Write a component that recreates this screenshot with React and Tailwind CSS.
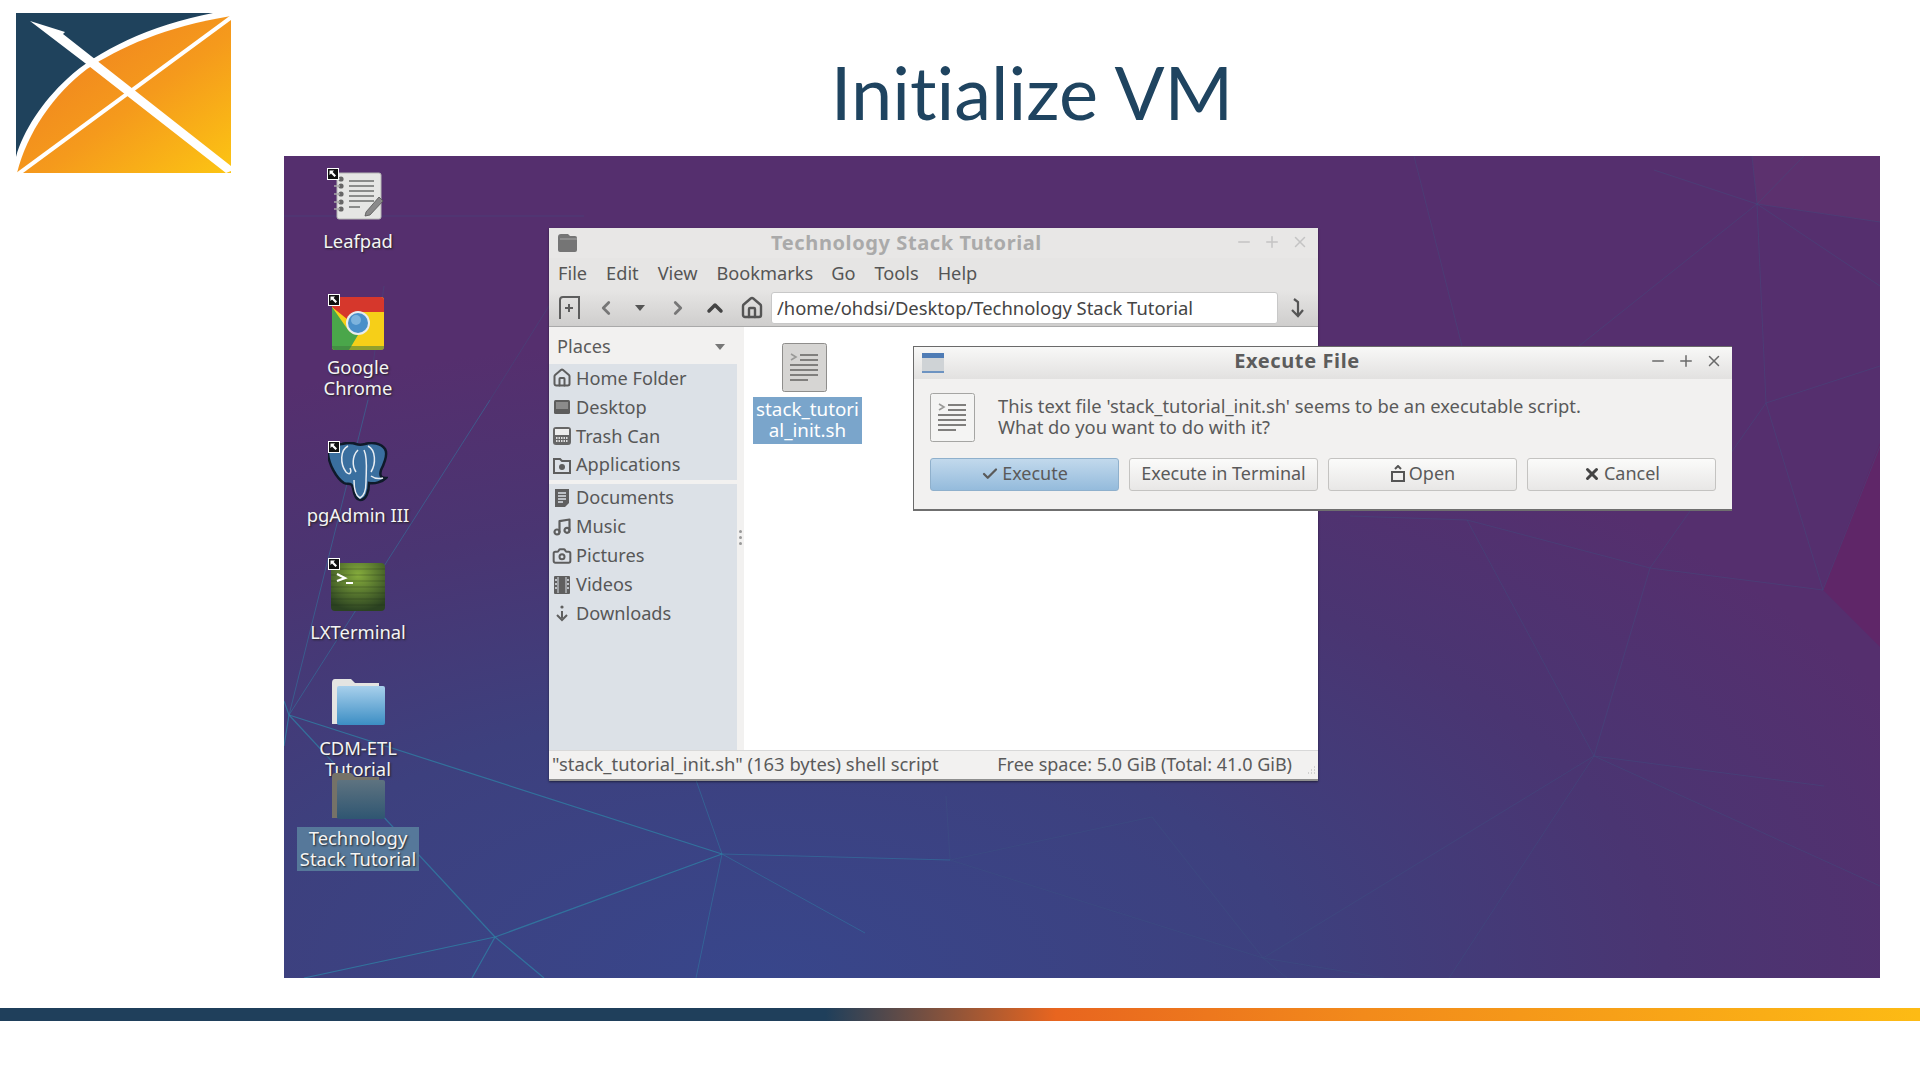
import { ChevronLeft, ChevronRight, ChevronUp, Check, X, Minus, Plus, Home, Camera, Music } from "lucide-react";

const uiFont = "font-['Noto_Sans',sans-serif]";

function Logo() {
  return (
    <svg width="216" height="161" viewBox="0 0 216 161" className="block">
      <defs>
        <linearGradient id="logoOrange" x1="0.2" y1="0.2" x2="1" y2="1">
          <stop offset="0" stopColor="#f0851f" />
          <stop offset="0.45" stopColor="#f59a1c" />
          <stop offset="1" stopColor="#fcc513" />
        </linearGradient>
      </defs>
      <path d="M1 0H198C135 12 82 38 52 66C28 88 8 118 1 144Z" fill="#1f425c" />
      <path d="M216 3C150 14 105 34 72 56C38 82 12 120 2 160H216Z" fill="url(#logoOrange)" />
      <path d="M15 8L50 19L48 21L216 153V158L211 160L70 50Z" fill="#fff" />
      <path d="M216 2V7L8 160H1Z" fill="#fff" />
    </svg>
  );
}

function Wallpaper() {
  const bright = [
    "M5 559L438 698",
    "M438 698L211 781",
    "M211 781L20 822",
    "M211 781L188 822",
    "M211 781L260 822",
    "M5 559L211 781",
    "M5 559L0 590",
    "M5 559L0 545",
  ];
  const medium = [
    "M5 559L84 244",
    "M5 559L206 244",
    "M438 698L412 822",
    "M438 698L581 777",
    "M438 698L666 704",
    "M438 698L400 590",
  ];
  const faint = [
    "M206 244L290 110",
    "M84 244L100 130",
    "M666 704L868 661",
    "M868 661L979 802",
    "M666 704L979 802",
    "M979 802L1003 822",
    "M979 802L1100 822",
    "M979 802L1310 600",
    "M666 704L662 640",
    "M1310 600L1165 822",
    "M1310 600L1540 630",
    "M1310 600L1596 730",
    "M1366 412L1310 600",
    "M1366 412L1539 434",
    "M1366 412L1183 364",
    "M1183 364L1310 600",
    "M1183 364L1066 360",
    "M1473 48L1468 0",
    "M1473 48L1520 0",
    "M1473 48L1596 66",
    "M1473 48L1596 130",
    "M1473 48L1482 247",
    "M1473 48L1370 14",
    "M1482 247L1539 434",
    "M1482 247L1596 210",
    "M1539 434L1596 290",
    "M1130 0L1183 210",
    "M0 60L300 60",
    "M1482 247L1366 412",
    "M1270 210L1473 48",
  ];
  return (
    <svg width="1596" height="822" viewBox="0 0 1596 822" className="absolute inset-0">
      <defs>
        <radialGradient id="wallBase" gradientUnits="userSpaceOnUse" cx="0" cy="0" r="1" gradientTransform="translate(480 822) scale(1250 640)">
          <stop offset="0" stopColor="#38468b" />
          <stop offset="0.42" stopColor="#3d407e" />
          <stop offset="0.72" stopColor="#4a3572" />
          <stop offset="1" stopColor="#552f6e" />
        </radialGradient>
      </defs>
      <rect width="1596" height="822" fill="url(#wallBase)" />
      <path d="M1539 434L1596 287V491Z" fill="#5f2668" />
      <path d="M1468 0H1596V66L1473 48Z" fill="#5c316e" />
      {faint.map((d) => (
        <path key={d} d={d} stroke="#3d5585" strokeOpacity="0.35" fill="none" />
      ))}
      {medium.map((d) => (
        <path key={d} d={d} stroke="#2f7fa6" strokeOpacity="0.5" fill="none" />
      ))}
      {bright.map((d) => (
        <path key={d} d={d} stroke="#2f81a6" strokeOpacity="0.75" strokeWidth="1.2" fill="none" />
      ))}
    </svg>
  );
}

function Emblem({ className }) {
  return (
    <svg width="12" height="12" viewBox="0 0 12 12" className={`absolute ${className}`}>
      <rect width="12" height="12" fill="#fff" />
      <rect x="1" y="1" width="10" height="10" fill="#111" />
      <path d="M2.5 2.5H7L5.6 4L9 7.5L7.5 9L4 5.6L2.5 7Z" fill="#fff" />
    </svg>
  );
}

function LeafpadIcon() {
  return (
    <svg width="50" height="50" viewBox="0 0 50 50">
      <rect x="4" y="1" width="44" height="46" rx="2" fill="#e5e6e4" stroke="#b5b6b4" />
      {[7, 14, 22, 30, 37].map((y) => (
        <g key={y}>
          <circle cx="8" cy={y} r="2.6" fill="#666" />
          <path d={`M1 ${y}H7`} stroke="#aaa" strokeWidth="1.5" />
        </g>
      ))}
      {[9, 14, 19, 24, 29].map((y) => (
        <path key={y} d={`M16 ${y}H41`} stroke="#8a8c8a" strokeWidth="2" />
      ))}
      <path d="M16 35H27" stroke="#8a8c8a" strokeWidth="2" />
      <path d="M33 40L46 25L50 29L37 43L32 44Z" fill="#8a8a8a" stroke="#555" strokeWidth="0.8" />
    </svg>
  );
}

function ChromeIcon() {
  return (
    <svg width="52" height="53" viewBox="0 0 52 53">
      <rect x="0" y="0" width="52" height="53" rx="3" fill="#f6cf18" />
      <path d="M0 3Q0 0 3 0H49Q52 0 52 3V15H26Q19 15 15 22L0 10Z" fill="#d6372c" />
      <path d="M0 10L14 30Q18 37 26 38L17 53H3Q0 53 0 50Z" fill="#4aa64a" />
      <path d="M0 49H52V50Q52 53 49 53H3Q0 53 0 50Z" fill="#3e7a3e" opacity="0.55" />
      <circle cx="26" cy="26" r="12" fill="#e9ecee" />
      <circle cx="26" cy="26" r="10" fill="#4a8fc9" />
      <circle cx="24" cy="23" r="5" fill="#7db3dd" />
    </svg>
  );
}

function ElephantIcon() {
  return (
    <svg width="60" height="60" viewBox="0 0 60 60">
      <path d="M14 2C6 2 0 6 0 12C1 22 8 36 16 41C20 43 24 40 25 46C26 52 28 58 32 58C38 58 41 50 41 41C47 42 54 40 58 36C54 36 51 35 53 28C57 20 60 12 57 7C53 1 44 0 37 2C33 3 31 3 28 2C23 0 18 1 14 2Z" fill="#3a6f9f" stroke="#0f1a2a" strokeWidth="2.5" />
      <path d="M20 4C12 8 12 22 18 30C22 34 24 30 22 26M40 4C48 8 48 22 43 30M30 8C24 14 24 24 28 30M36 8C40 16 38 30 38 40C38 48 36 54 32 56C28 54 26 46 26 38M43 34C47 37 51 37 55 36" fill="none" stroke="#e8edf2" strokeWidth="1.5" />
    </svg>
  );
}

function TerminalIcon() {
  return (
    <svg width="54" height="48" viewBox="0 0 54 48">
      <defs>
        <radialGradient id="termGlow" cx="0.5" cy="0.25" r="0.75">
          <stop offset="0" stopColor="#86ad3c" />
          <stop offset="1" stopColor="#2b4221" />
        </radialGradient>
      </defs>
      <rect width="54" height="48" rx="4" fill="url(#termGlow)" />
      {[6, 12, 18, 24, 30, 36, 42].map((y) => (
        <path key={y} d={`M0 ${y}H54`} stroke="#1d2b16" strokeOpacity="0.3" />
      ))}
      <path d="M6 11L14 15L6 18" fill="none" stroke="#fff" strokeWidth="2.2" />
      <path d="M15 20H22" stroke="#fff" strokeWidth="2" />
    </svg>
  );
}

function FolderIcon({ dark }) {
  return (
    <svg width="54" height="49" viewBox="0 0 54 49">
      <defs>
        <linearGradient id="folderBlue" x1="0" y1="0" x2="0" y2="1">
          <stop offset="0" stopColor="#a8d0ec" />
          <stop offset="1" stopColor="#3c8ec4" />
        </linearGradient>
        <linearGradient id="folderDark" x1="0" y1="0" x2="0" y2="1">
          <stop offset="0" stopColor="#5e7380" />
          <stop offset="1" stopColor="#2f5672" />
        </linearGradient>
      </defs>
      <path d="M1 5Q1 1 4 1H20L24 5H48V46H1Z" fill={dark ? "#757268" : "#e4e4e2"} />
      <rect x="6" y="8" width="48" height="39" rx="2" fill={dark ? "url(#folderDark)" : "url(#folderBlue)"} />
    </svg>
  );
}

function DesktopIcon({ className, labelClass, icon, emblem, selected, label }) {
  return (
    <div className={`absolute w-[130px] flex flex-col items-center ${className}`}>
      <div className="relative flex justify-center">
        {icon}
        {emblem}
      </div>
      <div
        className={`px-[3px] pb-[2px] text-center text-[18.4px] leading-[21px] text-[#f4f4f4] whitespace-pre-line [text-shadow:1px_1px_2px_#222] ${labelClass} ${selected ? "bg-[#56789a]" : ""}`}
      >
        {label}
      </div>
    </div>
  );
}

function TextFileGlyph({ light }) {
  return (
    <svg width="45" height="50" viewBox="0 0 45 50">
      <rect x="0.5" y="0.5" width="44" height="48" rx="2" fill={light ? "#f4f4f3" : "#d6d5d3"} stroke={light ? "#a5a5a3" : "#8f8e8c"} />
      <path d="M9 11L14 14L9 17" fill="none" stroke="#9a9a98" strokeWidth="1.6" />
      <path d="M18 12H36M18 17H36M8 22H36M8 27H36M8 32H36M8 37H26" stroke="#807f7d" strokeWidth="1.8" />
    </svg>
  );
}

function WindowButtons({ className }) {
  return (
    <div className={`flex items-center gap-[10px] ${className}`}>
      <Minus size={18} strokeWidth={2} />
      <Plus size={18} strokeWidth={2} />
      <X size={18} strokeWidth={2} />
    </div>
  );
}

const Glyph = {
  desktop: (
    <svg width="20" height="20" viewBox="0 0 20 20"><rect x="2" y="3" width="16" height="14" rx="1.5" fill="#5d5d5d" /><rect x="4" y="5" width="12" height="7" fill="#8b8b8b" /></svg>
  ),
  trash: (
    <svg width="20" height="20" viewBox="0 0 20 20"><rect x="1" y="1" width="18" height="18" rx="3" fill="#666" /><rect x="3" y="3" width="14" height="6" fill="#eee" /><path d="M4 12H16M4 15H16" stroke="#ddd" strokeDasharray="1.5 1" strokeWidth="2" /></svg>
  ),
  apps: (
    <svg width="20" height="20" viewBox="0 0 20 20"><path d="M2 4H8L10 6H18V18H2Z" fill="none" stroke="#5d5d5d" strokeWidth="2" /><circle cx="10" cy="12" r="3" fill="#5d5d5d" /></svg>
  ),
  docs: (
    <svg width="20" height="20" viewBox="0 0 20 20"><path d="M3 1H17V15L13 19H3Z" fill="#5f5f5f" /><path d="M6 5H14M6 8H14M6 11H14M6 14H11" stroke="#dce1e7" strokeWidth="1.3" /></svg>
  ),
  videos: (
    <svg width="20" height="20" viewBox="0 0 20 20"><rect x="2" y="1" width="16" height="18" rx="1" fill="#5f5f5f" /><path d="M6 2V18M14 2V18" stroke="#dce1e7" strokeWidth="1" /><path d="M3 5H5M3 9H5M3 13H5M15 5H17M15 9H17M15 13H17" stroke="#dce1e7" strokeWidth="1.5" /></svg>
  ),
  downloads: (
    <svg width="20" height="20" viewBox="0 0 20 20"><circle cx="10" cy="3" r="1.6" fill="#5f5f5f" /><path d="M10 7V14M5 11L10 16L15 11" fill="none" stroke="#5f5f5f" strokeWidth="2" /></svg>
  ),
};

function PlaceRow({ icon, label }) {
  return (
    <div className="h-[28.9px] flex items-center text-[18.2px] text-[#575757]">
      <span className="w-[28px] pl-[3px] flex items-center justify-start shrink-0">{icon}</span>
      <span className="ml-[-1px]">{label}</span>
    </div>
  );
}

function FileManager() {
  return (
    <div className="absolute left-[265px] top-[72px] w-[769px] h-[553px] flex flex-col bg-white shadow-[0_1px_2px_rgba(0,0,0,0.5)]">
      <div className="relative h-[30px] bg-[#e8e7e6] flex items-center justify-center pr-[54px]">
        <svg width="22" height="22" viewBox="0 0 22 22" className="absolute left-[7px] top-[4px]">
          <path d="M2 5Q2 2 5 2H12L14 4H19Q21 4 21 6V18Q21 20 19 20H4Q2 20 2 18Z" fill="#757575" />
          <path d="M4 7H21" stroke="#a8a8a8" />
        </svg>
        <span className="font-bold text-[20px] tracking-[0.6px] text-[#aaaaaa]">Technology Stack Tutorial</span>
        <WindowButtons className="absolute right-[9px] top-[5px] text-[#c4c4c4]" />
      </div>
      <div className="h-[32px] bg-[#e6e5e4] flex items-center gap-[19px] pl-[9px] text-[18.2px] text-[#555]">
        <span>File</span>
        <span>Edit</span>
        <span>View</span>
        <span className="mr-[-1px]">Bookmarks</span>
        <span>Go</span>
        <span>Tools</span>
        <span>Help</span>
      </div>
      <div className="h-[37px] bg-gradient-to-b from-[#e6e5e4] to-[#cfcecd] border-b border-[#a9a9a9] flex items-center pl-[8px] text-[#5e5e5e]">
        <svg width="24" height="26" viewBox="0 0 24 26" fill="none" stroke="#5d5d5d" strokeWidth="2">
          <path d="M3 24V5Q3 2 6 2H22V24" />
          <path d="M12 9V17M8 13H16" />
        </svg>
        <ChevronLeft size={22} strokeWidth={3} className="ml-[14px] text-[#777]" />
        <svg width="14" height="8" viewBox="0 0 14 8" className="ml-[16px]"><path d="M2 1H12L7 7Z" fill="#555" /></svg>
        <ChevronRight size={22} strokeWidth={3} className="ml-[20px] text-[#777]" />
        <ChevronUp size={24} strokeWidth={3.5} className="ml-[14px] text-[#444]" />
        <Home size={24} strokeWidth={2.4} className="ml-[13px] text-[#555]" />
        <div className="ml-[7px] w-[507px] h-[32px] bg-white rounded-[3px] border border-[#c8c8c8] flex items-center pl-[5px] text-[18.4px] text-[#444]">
          /home/ohdsi/Desktop/Technology Stack Tutorial
        </div>
        <svg width="16" height="22" viewBox="0 0 16 22" fill="none" stroke="#555" strokeWidth="2.2" className="ml-[11px]">
          <path d="M5 2L9 5V19M3 13L9 19L14 13" />
        </svg>
      </div>
      <div className="flex-1 flex min-h-0">
        <div className="w-[188px] flex flex-col bg-[#dce1e7]">
          <div className="h-[37px] bg-[#f2f1f0] flex items-center justify-between pl-[8px] pr-[11px] pt-[2px] text-[18.2px] text-[#5a5a5a]">
            <span>Places</span>
            <svg width="12" height="8" viewBox="0 0 12 8"><path d="M1 1H11L6 7Z" fill="#777" /></svg>
          </div>
          <PlaceRow icon={<Home size={20} strokeWidth={2.4} className="text-[#5d5d5d]" />} label="Home Folder" />
          <PlaceRow icon={Glyph.desktop} label="Desktop" />
          <PlaceRow icon={Glyph.trash} label="Trash Can" />
          <PlaceRow icon={Glyph.apps} label="Applications" />
          <div className="h-[4px] bg-[#f2f1f0]" />
          <PlaceRow icon={Glyph.docs} label="Documents" />
          <PlaceRow icon={<Music size={20} strokeWidth={2.6} className="text-[#5d5d5d]" />} label="Music" />
          <PlaceRow icon={<Camera size={20} strokeWidth={2.4} className="text-[#5d5d5d]" />} label="Pictures" />
          <PlaceRow icon={Glyph.videos} label="Videos" />
          <PlaceRow icon={Glyph.downloads} label="Downloads" />
        </div>
        <div className="w-[7px] bg-[#f2f1f0] flex flex-col items-center justify-center gap-[3px] pb-[2px]">
          <span className="w-[3px] h-[3px] rounded-full bg-[#999]" />
          <span className="w-[3px] h-[3px] rounded-full bg-[#999]" />
          <span className="w-[3px] h-[3px] rounded-full bg-[#999]" />
        </div>
        <div className="flex-1 pl-[9px] pt-[16px]">
          <div className="w-[109px] flex flex-col items-center">
            <span className="relative left-[-3px]"><TextFileGlyph /></span>
            <div className="mt-[4px] w-[109px] h-[47px] bg-[#7aa5cb] text-white text-[18.8px] leading-[21px] text-center pt-[2px] overflow-hidden whitespace-nowrap">
              stack_tutori<br />al_init.sh
            </div>
          </div>
        </div>
      </div>
      <div className="relative h-[31px] pb-[2px] bg-[#f2f1f0] border-t border-[#d8d8d8] border-b-2 border-b-[#8f8f8f] flex items-center justify-between pl-[3px] pr-[26px] text-[#5a5a5a]">
        <span className="text-[18.4px]">"stack_tutorial_init.sh" (163 bytes) shell script</span>
        <span className="text-[18px]">Free space: 5.0 GiB (Total: 41.0 GiB)</span>
        <svg width="12" height="12" viewBox="0 0 12 12" className="absolute right-[1px] bottom-[2px]">
          <path d="M9 2H10M6 5H7M9 5H10M3 8H4M6 8H7M9 8H10" stroke="#b0b0b0" />
        </svg>
      </div>
    </div>
  );
}

function DialogButton({ className, icon, children }) {
  return (
    <div
      className={`w-[189px] h-[33px] pb-[2px] rounded-[3px] border flex items-center justify-center gap-[3px] text-[18px] text-[#5a5a5a] ${className}`}
    >
      {icon}
      {children}
    </div>
  );
}

function ExecuteDialog() {
  const plain = "border-[#c4c3c1] bg-gradient-to-b from-[#fbfbfa] to-[#e8e7e6]";
  return (
    <div className="absolute left-[629px] top-[190px] w-[819px] h-[165px] flex flex-col bg-[#f2f1f0] border-t border-l border-[#6a6a6a] border-b-2 border-b-[#6f6f6f]">
      <div className="relative h-[32px] pb-[4px] bg-gradient-to-b from-[#f8f8f7] to-[#e2e1e0] flex items-center justify-center pr-[52px]">
        <svg width="22" height="20" viewBox="0 0 22 20" className="absolute left-[8px] top-[6px]">
          <rect width="22" height="20" fill="#cfd3d6" />
          <rect width="22" height="5" fill="#4f7cb5" />
          <rect y="18" width="22" height="2" fill="#6d93c1" />
        </svg>
        <span className="font-bold text-[20px] tracking-[0.6px] text-[#5c5c5c]">Execute File</span>
        <WindowButtons className="absolute right-[9px] top-[5px] text-[#6a6a6a]" />
      </div>
      <div className="flex pl-[16px] pt-[14px]">
        <TextFileGlyph light />
        <div className="ml-[23px] text-[18.35px] leading-[21px] text-[#5a5a5a] pt-[2px]">
          This text file 'stack_tutorial_init.sh' seems to be an executable script.
          <br />
          What do you want to do with it?
        </div>
      </div>
      <div className="flex gap-[10px] pl-[16px] mt-[15px]">
        <DialogButton className="border-[#8fb0cc] bg-gradient-to-b from-[#c2d9ec] to-[#94bbdc]" icon={<Check size={18} strokeWidth={3} />}>
          Execute
        </DialogButton>
        <DialogButton className={plain}>Execute in Terminal</DialogButton>
        <DialogButton
          className={plain}
          icon={
            <svg width="16" height="18" viewBox="0 0 16 18" fill="none" stroke="#555" strokeWidth="2">
              <path d="M2 7H14V16H2ZM5 4L8 1L11 4" />
            </svg>
          }
        >
          Open
        </DialogButton>
        <DialogButton className={plain} icon={<X size={18} strokeWidth={4} className="text-[#444]" />}>
          Cancel
        </DialogButton>
      </div>
    </div>
  );
}

export default function App() {
  return (
    <div className={`w-[1920px] h-[1080px] bg-white overflow-hidden ${uiFont}`}>
      <header className="h-[156px] flex items-start">
        <div className="ml-[15px] mt-[13px]">
          <Logo />
        </div>
        <h1 className="flex-1 h-[156px] flex items-center justify-center pr-[87px] pt-[26px] font-['Lato',sans-serif] text-[74px] text-[#1f4460] [font-variant-ligatures:none]">
          Initialize VM
        </h1>
      </header>
      <div className="relative ml-[284px] w-[1596px] h-[822px] overflow-hidden">
        <Wallpaper />
        <DesktopIcon className="left-[9px] top-[16px]" labelClass="mt-[8px]" icon={<LeafpadIcon />} emblem={<Emblem className="left-[-6px] top-[-4px]" />} label="Leafpad" />
        <DesktopIcon className="left-[9px] top-[141px]" labelClass="mt-[6px]" icon={<ChromeIcon />} emblem={<Emblem className="left-[-4px] top-[-3px]" />} label={"Google\nChrome"} />
        <DesktopIcon className="left-[9px] top-[286px]" labelClass="mt-[2px]" icon={<ElephantIcon />} emblem={<Emblem className="left-[0px] top-[-1px]" />} label="pgAdmin III" />
        <DesktopIcon className="left-[9px] top-[407px]" labelClass="mt-[10px]" icon={<TerminalIcon />} emblem={<Emblem className="left-[-3px] top-[-5px]" />} label="LXTerminal" />
        <DesktopIcon className="left-[9px] top-[522px]" labelClass="mt-[10px]" icon={<FolderIcon />} label={"CDM-ETL\nTutorial"} />
        <DesktopIcon className="left-[9px] top-[616px]" labelClass="mt-[6px]" icon={<FolderIcon dark />} selected label={"Technology\nStack Tutorial"} />
        <FileManager />
        <ExecuteDialog />
      </div>
      <div className="mt-[30px] h-[13px] bg-[linear-gradient(to_right,#1f3f5b_0%,#1f3f5b_43%,#e8651f_55%,#f28a1b_71%,#fdbb14_100%)]" />
    </div>
  );
}
